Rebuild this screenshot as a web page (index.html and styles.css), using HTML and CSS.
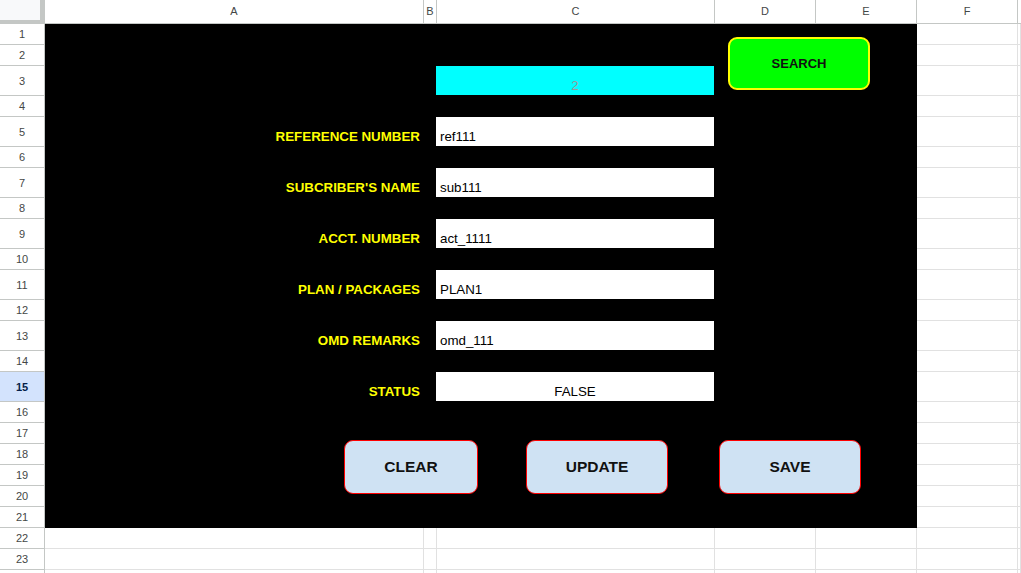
FILE: index.html
```html
<!DOCTYPE html>
<html>
<head>
<meta charset="utf-8">
<link rel="stylesheet" href="styles.css">
</head>
<body>
<div class="sheet">
  <div class="corner"></div>
  <div class="ch">A</div><div class="ch">B</div><div class="ch">C</div><div class="ch">D</div><div class="ch">E</div><div class="ch">F</div><div class="ch ch-rest"></div>

  <div class="panel">
    <div class="field cyan r3">2</div>

    <div class="label r5">REFERENCE NUMBER</div>
    <div class="field r5">ref111</div>

    <div class="label r7">SUBCRIBER'S NAME</div>
    <div class="field r7">sub111</div>

    <div class="label r9">ACCT. NUMBER</div>
    <div class="field r9">act_1111</div>

    <div class="label r11">PLAN / PACKAGES</div>
    <div class="field r11">PLAN1</div>

    <div class="label r13">OMD REMARKS</div>
    <div class="field r13">omd_111</div>

    <div class="label r15">STATUS</div>
    <div class="field center r15">FALSE</div>

    <div class="btn btn-search">SEARCH</div>
    <div class="btn btn-action btn-clear">CLEAR</div>
    <div class="btn btn-action btn-update">UPDATE</div>
    <div class="btn btn-action btn-save">SAVE</div>
  </div>

  <div class="rh">1</div><div class="c"></div><div class="c"></div>
  <div class="rh">2</div><div class="c"></div><div class="c"></div>
  <div class="rh">3</div><div class="c"></div><div class="c"></div>
  <div class="rh">4</div><div class="c"></div><div class="c"></div>
  <div class="rh">5</div><div class="c"></div><div class="c"></div>
  <div class="rh">6</div><div class="c"></div><div class="c"></div>
  <div class="rh">7</div><div class="c"></div><div class="c"></div>
  <div class="rh">8</div><div class="c"></div><div class="c"></div>
  <div class="rh">9</div><div class="c"></div><div class="c"></div>
  <div class="rh">10</div><div class="c"></div><div class="c"></div>
  <div class="rh">11</div><div class="c"></div><div class="c"></div>
  <div class="rh">12</div><div class="c"></div><div class="c"></div>
  <div class="rh">13</div><div class="c"></div><div class="c"></div>
  <div class="rh">14</div><div class="c"></div><div class="c"></div>
  <div class="rh rh-active">15</div><div class="c"></div><div class="c"></div>
  <div class="rh">16</div><div class="c"></div><div class="c"></div>
  <div class="rh">17</div><div class="c"></div><div class="c"></div>
  <div class="rh">18</div><div class="c"></div><div class="c"></div>
  <div class="rh">19</div><div class="c"></div><div class="c"></div>
  <div class="rh">20</div><div class="c"></div><div class="c"></div>
  <div class="rh">21</div><div class="c"></div><div class="c"></div>
  <div class="rh">22</div><div class="c"></div><div class="c"></div><div class="c"></div><div class="c"></div><div class="c"></div><div class="c"></div><div class="c"></div>
  <div class="rh">23</div><div class="c"></div><div class="c"></div><div class="c"></div><div class="c"></div><div class="c"></div><div class="c"></div><div class="c"></div>
  <div class="rh"></div><div class="c"></div><div class="c"></div><div class="c"></div><div class="c"></div><div class="c"></div><div class="c"></div><div class="c"></div>
</div>
</body>
</html>
```

FILE: styles.css
```css
html, body {
  margin: 0;
  padding: 0;
  background: #ffffff;
  overflow: hidden;
}

body {
  width: 1021px;
  height: 573px;
  font-family: "Liberation Sans", Arial, sans-serif;
}

.sheet {
  display: grid;
  grid-template-columns: 45px 379px 13px 278px 101px 101px 101px 1fr;
  grid-template-rows:
    24px
    21px 21px 30px 21px 30px 21px 30px 21px 30px 21px 30px 21px 30px 21px 30px
    21px 21px 21px 21px 21px 21px 21px 21px 21px;
  width: 1021px;
}

.sheet > div {
  box-sizing: border-box;
}

.corner {
  background: #f8f9fa;
  border-right: 5px solid #c4c7c5;
  border-bottom: 4px solid #c4c7c5;
}

.ch {
  border-right: 1px solid #c4c7c5;
  border-bottom: 1px solid #c4c7c5;
  font-size: 11px;
  color: #444746;
  display: flex;
  align-items: center;
  justify-content: center;
  padding-bottom: 1px;
}

.ch-rest {
  border-right: none;
}

.rh {
  border-right: 1px solid #c4c7c5;
  border-bottom: 1px solid #c4c7c5;
  font-size: 11px;
  color: #444746;
  display: flex;
  align-items: center;
  justify-content: center;
}

.rh-active {
  background: #d3e3fd;
  color: #041e49;
  font-weight: bold;
}

.c {
  border-right: 1px solid #e1e1e1;
  border-bottom: 1px solid #e1e1e1;
}

/* black form panel spanning A1:E21 */
.panel {
  grid-column: 2 / 7;
  grid-row: 2 / 23;
  background: #000000;
  position: relative;
  display: grid;
  grid-template-columns: 379px 13px 278px 101px 101px;
  grid-template-rows:
    21px 21px 30px 21px 30px 21px 30px 21px 30px 21px 30px 21px 30px 21px 30px
    21px 21px 21px 21px 21px 21px;
}

.r3 { grid-row: 3; }
.r5 { grid-row: 5; }
.r7 { grid-row: 7; }
.r9 { grid-row: 9; }
.r11 { grid-row: 11; }
.r13 { grid-row: 13; }
.r15 { grid-row: 15; }

.label {
  grid-column: 1;
  display: flex;
  align-items: flex-end;
  justify-content: flex-end;
  padding: 0 4px 3px 0;
  font-size: 13.33px;
  line-height: 15px;
  font-weight: bold;
  color: #ffff00;
  white-space: nowrap;
}

.field {
  grid-column: 3;
  margin: 0 1px 1px -1px;
  background: #ffffff;
  display: flex;
  align-items: flex-end;
  padding: 0 4px 2px 4px;
  font-size: 13.33px;
  line-height: 15px;
  color: #000000;
  white-space: nowrap;
}

.center {
  justify-content: center;
}

.cyan {
  background: #00ffff;
  color: #999999;
  justify-content: center;
}

.btn {
  position: absolute;
  box-sizing: border-box;
  display: flex;
  align-items: center;
  justify-content: center;
  font-weight: bold;
  color: #111111;
}

.btn-search {
  left: 683px;
  top: 13px;
  width: 142px;
  height: 53px;
  background: #00ff00;
  border: 2px solid #ffff00;
  border-radius: 9px;
  font-size: 13px;
}

.btn-action {
  top: 416px;
  height: 54px;
  background: #cfe2f3;
  border: 1px solid #ff0000;
  border-radius: 9px;
  font-size: 15.5px;
}

.btn-clear {
  left: 299px;
  width: 134px;
}

.btn-update {
  left: 481px;
  width: 142px;
}

.btn-save {
  left: 674px;
  width: 142px;
}
```
